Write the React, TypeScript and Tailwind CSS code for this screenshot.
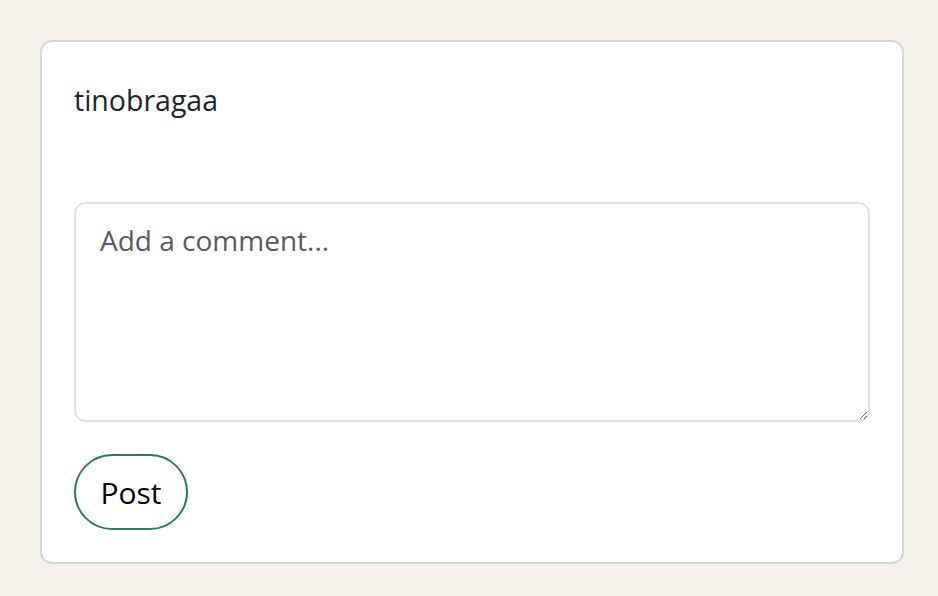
export default function App() {
  return (
    <div className="min-h-[596px] bg-[#f4f1ea] pt-[40px] pl-[40px] font-['Open_Sans',sans-serif]">
      <div className="w-[864px] rounded-[12px] border-2 border-[#d6d6d4] bg-white px-[32px] pt-[40px] pb-[32px]">
        <div className="text-[28.5px] leading-[36px] text-[#212529]">tinobragaa</div>
        <textarea
          className="mt-[84px] block h-[220px] w-full resize-y rounded-[12px] border-2 border-[#e3e3e3] px-[24px] py-[16px] text-[28px] leading-[40px] text-[#212529] outline-none placeholder:text-[#5a5a5a]"
          placeholder="Add a comment..."
        />
        <button className="mt-[32px] h-[76px] w-[114px] rounded-full border-2 border-[#2d7d5a] bg-white text-[30px] text-black">
          Post
        </button>
      </div>
    </div>
  );
}
